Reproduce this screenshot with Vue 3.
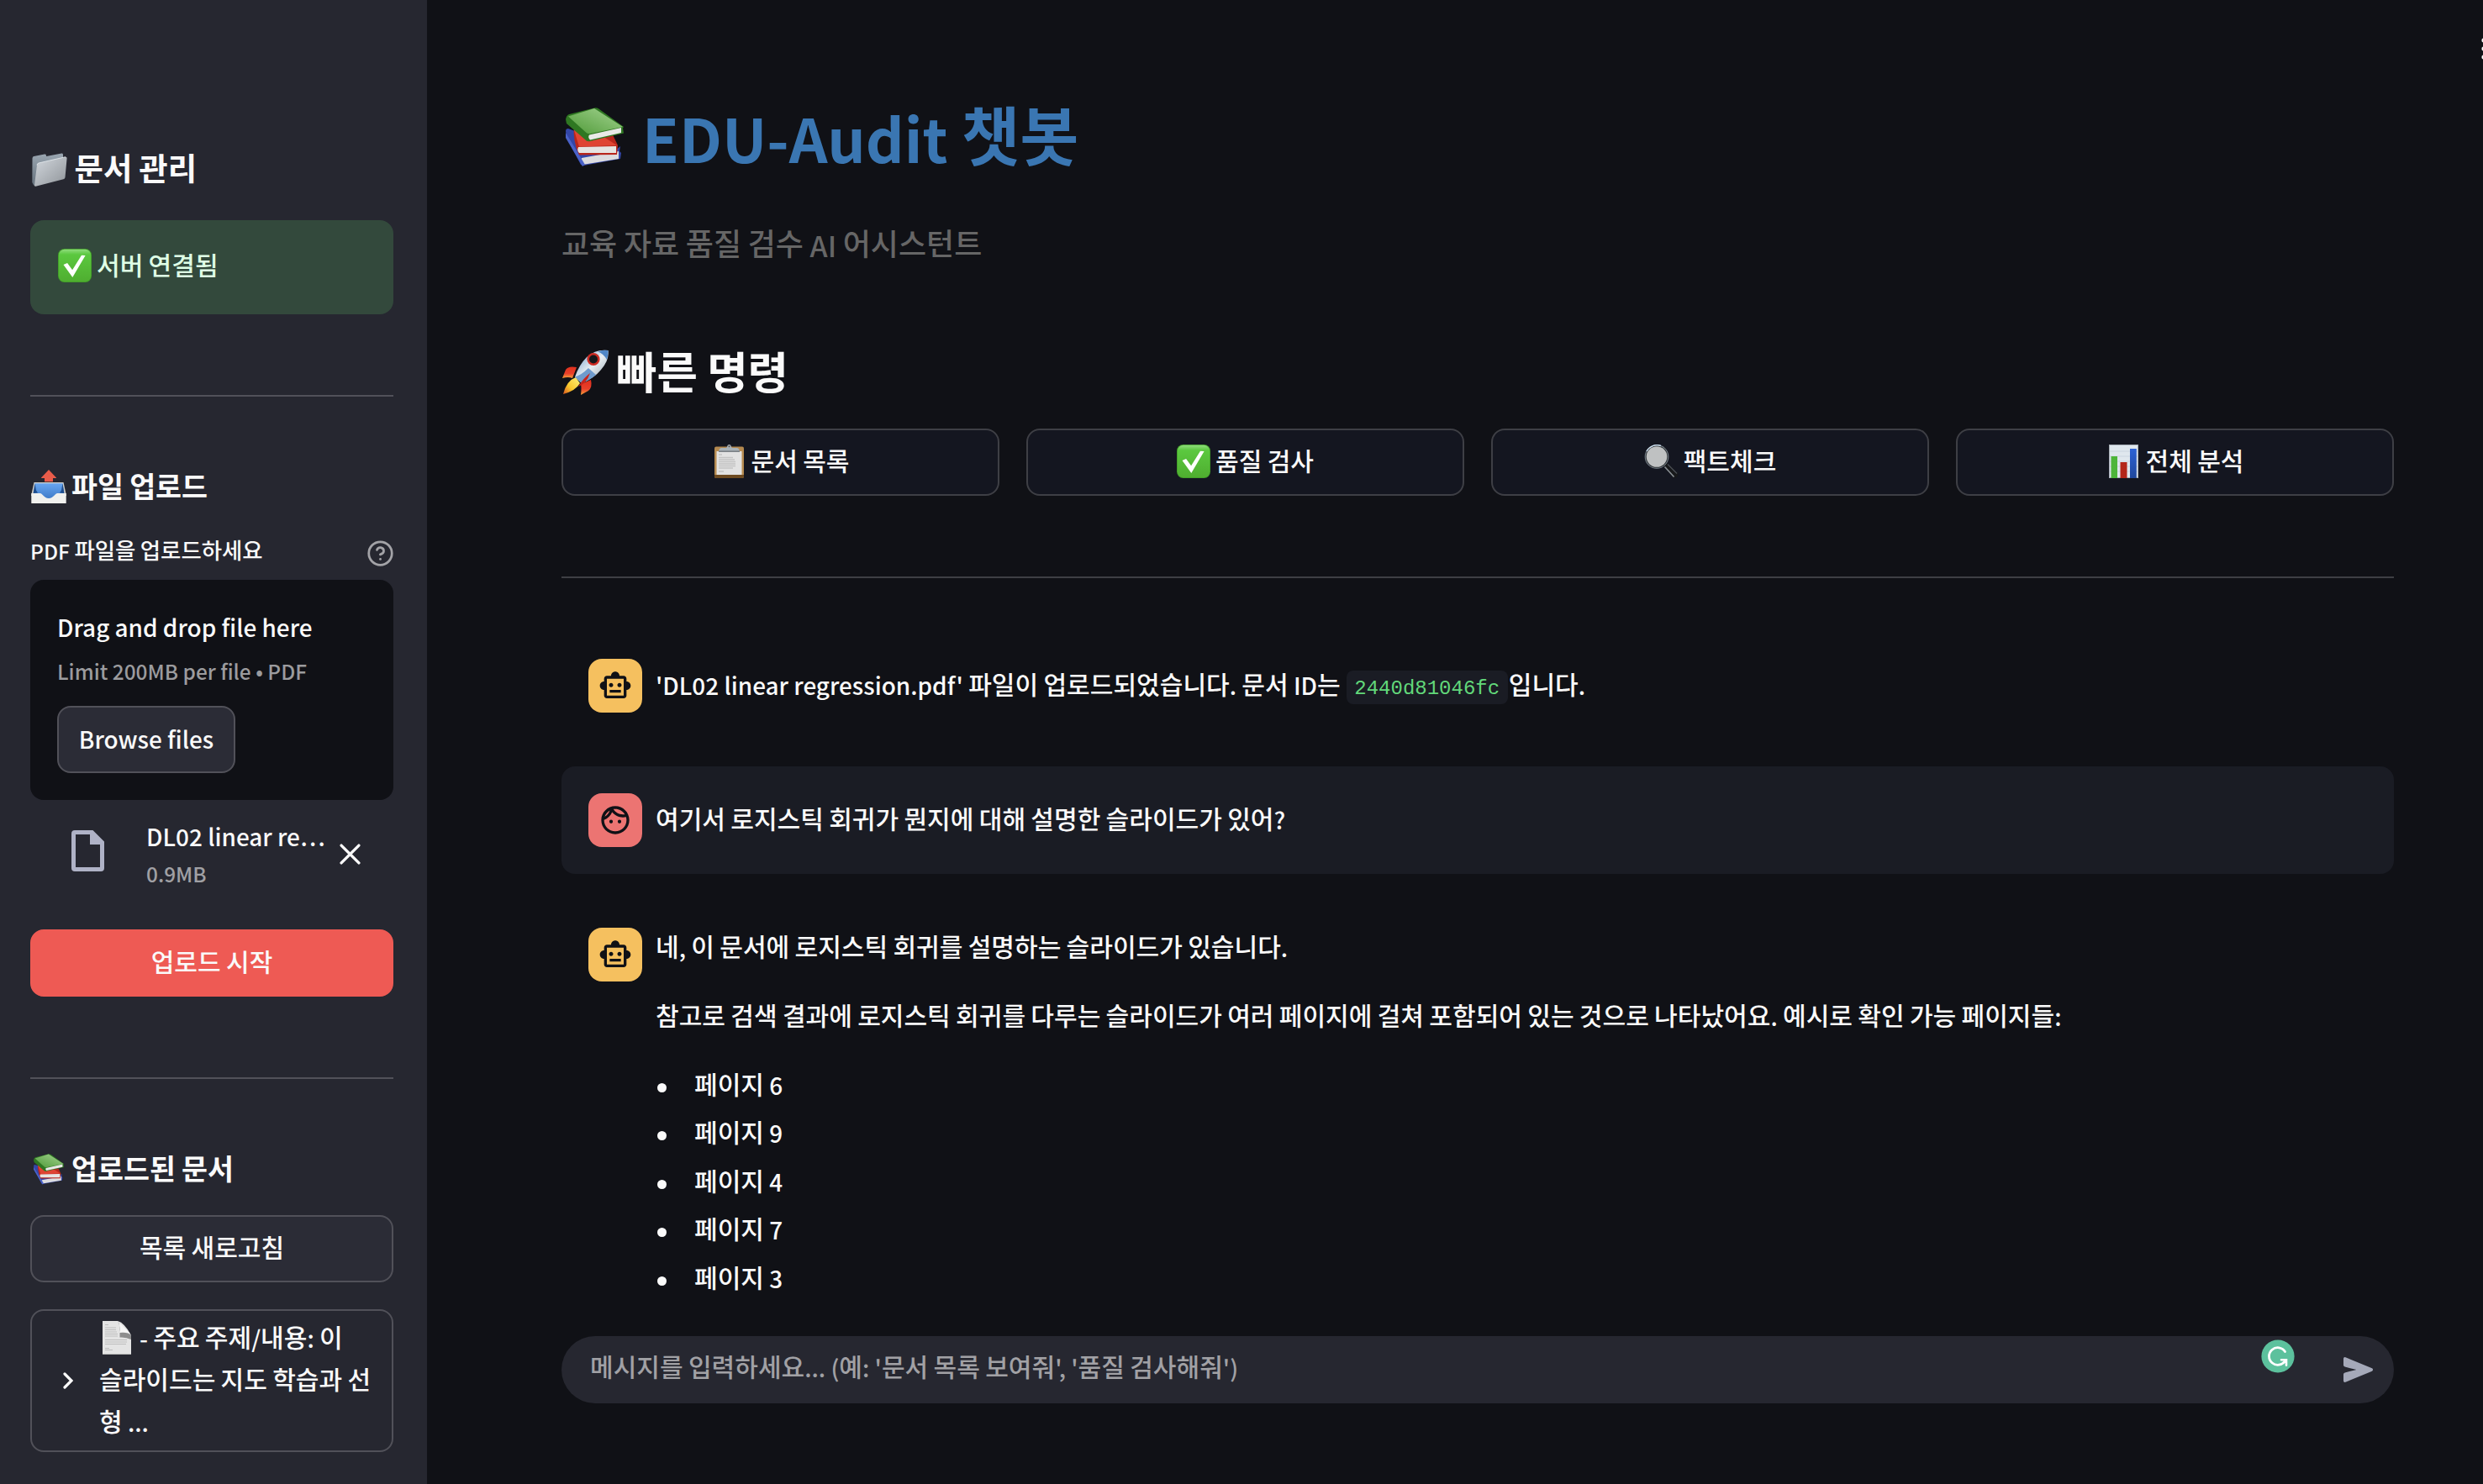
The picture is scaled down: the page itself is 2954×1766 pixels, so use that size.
<script setup>
import { h } from 'vue'

// Hangul and Latin runs are sized separately, so each run gets its own span.
const Txt = (props) =>
  h(
    'span',
    { class: 'txt' },
    props.t
      .split(/([\uac00-\ud7a3]+)/)
      .filter(Boolean)
      .map((run) => (/[\uac00-\ud7a3]/.test(run) ? h('span', { class: 'ko' }, run) : run))
  )
Txt.props = ['t']

const commands = [
  { icon: 'clipboard', label: '문서 목록' },
  { icon: 'check', label: '품질 검사' },
  { icon: 'magnifier', label: '팩트체크' },
  { icon: 'chart', label: '전체 분석' }
]
const pages = [6, 9, 4, 7, 3]
</script>

<template>
  <svg class="defs" width="0" height="0" aria-hidden="true">
    <defs>
      <linearGradient id="gCheck" x1="0" y1="0" x2="0" y2="1">
        <stop offset="0" stop-color="#8fdc7c" /><stop offset=".16" stop-color="#5bc83f" /><stop offset="1" stop-color="#4fae30" />
      </linearGradient>
      <linearGradient id="gFolder" x1="0" y1="0" x2="1" y2="1">
        <stop offset="0" stop-color="#d3d8de" /><stop offset="1" stop-color="#8f9499" />
      </linearGradient>
      <linearGradient id="gFolderBack" x1="0" y1="0" x2="0" y2="1">
        <stop offset="0" stop-color="#9aa6b1" /><stop offset="1" stop-color="#66727d" />
      </linearGradient>
      <linearGradient id="gGreen" x1="0" y1="1" x2="1" y2="0">
        <stop offset="0" stop-color="#4f9a38" /><stop offset="1" stop-color="#a4d491" />
      </linearGradient>
      <linearGradient id="gTray" x1="0" y1="0" x2="0" y2="1">
        <stop offset="0" stop-color="#67a5f0" /><stop offset="1" stop-color="#3d79c6" />
      </linearGradient>
      <linearGradient id="gRocket" x1="0" y1="0" x2="1" y2="1">
        <stop offset="0" stop-color="#5d8fc4" /><stop offset=".5" stop-color="#e8eef2" /><stop offset="1" stop-color="#8c9ca8" />
      </linearGradient>
      <linearGradient id="gFlame" x1="1" y1="0" x2="0" y2="1">
        <stop offset="0" stop-color="#fff27a" /><stop offset=".6" stop-color="#f8c62c" /><stop offset="1" stop-color="#d9541e" />
      </linearGradient>
      <linearGradient id="gFin" x1="0" y1="0" x2="0" y2="1">
        <stop offset="0" stop-color="#e0301e" /><stop offset=".6" stop-color="#e8402a" /><stop offset="1" stop-color="#f6a13a" />
      </linearGradient>
      <linearGradient id="gBlueBar" x1="0" y1="0" x2="0" y2="1">
        <stop offset="0" stop-color="#2c62d6" /><stop offset="1" stop-color="#1f479c" />
      </linearGradient>
    </defs>
    <symbol id="check" viewBox="0 0 40 40">
      <rect width="40" height="40" rx="7.5" fill="#3f9a26" />
      <rect x=".8" y=".8" width="38.4" height="38.4" rx="7" fill="url(#gCheck)" />
      <path d="M6.500 19l4.600-2 6 8.300L28 7.800l4.600.2L17.300 34z" fill="#fff" />
    </symbol>
    <symbol id="folder" viewBox="0 0 42 40">
      <path d="M.5 6.500Q.6 4.500 2.300 4.100L15 1.600q1.600-.3 1.800 1l.3 1.300L35.500.5q1.500-.2 1.500 1.500v5L4 39 2 38.500.3 35z" fill="url(#gFolderBack)" />
      <path d="M6 14.500q.2-2 2-2.500L40 4.700q1.700-.3 1.600 1.500L39.500 29q-.2 1.700-2 2.300L4.500 39.800Q2.800 40 3 38.200z" fill="url(#gFolder)" />
      <path d="M6 14.500q.2-2 2-2.500L40 4.700" fill="none" stroke="#e9edf1" stroke-width=".8" />
    </symbol>
    <symbol id="outbox" viewBox="0 0 42 40">
      <path d="M3.500 15h35L42 31H0z" fill="#cfcfcb" />
      <path d="M4.500 16.300h33L40.200 36H1.800z" fill="url(#gTray)" />
      <path d="M4.500 16.300L2.500 28l5.500-.5-2-3zM37.500 16.300l2 11.700-5.500-.5 2-3z" fill="#1f4d8c" />
      <path d="M.3 28h10.200c3.500 0 4.500 6 10.500 6s7-6 10.500-6h10.200v12H.3z" fill="#f1f1ee" />
      <path d="M21 0l9 9.500q.3.500-.4.500H26v4.200H16V10h-3.600q-.7 0-.4-.5z" fill="#e85c4a" />
    </symbol>
    <symbol id="books" viewBox="0 0 69 71">
      <path d="M0 28q0-3 3-3l8 3 8 28 39-4 7-6-1 6 2 2-1 7-44 8-3-1L1 36z" fill="#3346a8" />
      <path d="M19 60l44-8v9l-43 7q-3-4-1-8z" fill="#dcdcdf" />
      <path d="M0 30l20 33 3 5-3 2L0 36z" fill="#4a62c8" />
      <path d="M10 20L52 24l10 21-1 11-45 .5Q8 40 10 20z" fill="#b8261c" />
      <path d="M10 27l12-7 39 25-45 1.500z" fill="#df4433" />
      <path d="M15 47l45-1v8H16q-3-3-1-7z" fill="#e6e4e2" />
      <path d="M0 14Q1 9 4 8L34 .5q3-.5 5 .8L69 23l-1 1.500 1 6L29 40q-4 .8-6-2L1 19z" fill="#2f7722" />
      <path d="M3 10.500L34 1l34 22-39 8q-3 .5-5-1.500z" fill="url(#gGreen)" />
      <path d="M28 32.500l38-8.500v6L29 38.500q-3-3-1-6z" fill="#e9e9e7" />
    </symbol>
    <symbol id="page" viewBox="0 0 34 40">
      <path d="M0 0h18q8 2 16 17v23H0z" fill="#e4e4e4" />
      <path d="M20.500 2.500L33 15q-6-2-12.500-1z" fill="#f6f6f6" />
      <path d="M18 0q4 6 2.500 14Q30 13 34 17v5Q28 19 20.500 19.500V6z" fill="#8d8d8d" />
      <path d="M3 4.500h4M3 8h13M3 10.500h13M3 13h14M3 15.500h15M3 18h15M3 22.500h26M3 25h26M3 27.500h25M3 32.500h5M3 34.500h9" stroke="#bdbdbd" stroke-width="1.100" />
      <path d="M0 39h34v1H0z" fill="#b5b5b5" />
    </symbol>
    <symbol id="clipboard" viewBox="0 0 35 40">
      <rect y="2.500" width="35" height="37.500" rx="2" fill="#b58a50" />
      <path d="M0 36h35v2q0 2-2 2H2q-2 0-2-2z" fill="#6d4a20" />
      <path d="M2.500 8h30v28h-30z" fill="#e2e2e2" />
      <path d="M5 12h4M5 15.500h17M5 18h19M5 20.500h20M5 23h20M5 25.500h20M5 28h17M5 32h6" stroke="#c4c4c4" stroke-width="1.500" />
      <path d="M5 8.500q.3-4 3-4.500h5.500q1.500 0 1.700-2 .3-2 2.300-2t2.300 2q.2 2 1.700 2H27q2.700.5 3 4.500z" fill="#a9b2b9" />
      <path d="M5 7.500h25v1.300H5z" fill="#6a7074" /><circle cx="17.500" cy="2.300" r="1" fill="#555" />
    </symbol>
    <symbol id="magnifier" viewBox="0 0 41 40">
      <path d="M23 26l4.500-4L40 34q1 3-1.500 5-2 1.600-4 .5z" fill="#17181a" />
      <path d="M24.500 26.500l11 12" stroke="#8a9096" stroke-width="1.600" />
      <path d="M28 23.500l11 11" stroke="#4b5055" stroke-width="1.200" />
      <circle cx="15" cy="14.500" r="14.300" fill="#7c868e" />
      <circle cx="15" cy="14.500" r="13.300" fill="#2b2f33" />
      <circle cx="15" cy="14.500" r="12.300" fill="#bfc1c2" />
      <path d="M3 8A14 14 0 0 1 20 1.500" fill="none" stroke="#cfe2f2" stroke-width="1.400" />
    </symbol>
    <symbol id="chart" viewBox="0 0 35 40">
      <path d="M0 0h35v40H0z" fill="#a7aeb6" /><path d="M1 1h33v38H1z" fill="#dfe7ee" />
      <path d="M1 8h33M1 14h33M1 20h33M1 26h33M1 32h33" stroke="#c5d0da" stroke-width=".8" />
      <path d="M2.500 14h7.500v26H2.500z" fill="#4db53a" /><path d="M13.500 21h8v19h-8z" fill="#b3261a" />
      <path d="M25 5h7.800v35H25z" fill="url(#gBlueBar)" />
    </symbol>
    <symbol id="rocket" viewBox="0 0 56 54">
      <path d="M18 21Q8 19 5 24L1 34q7-2 12 0z" fill="url(#gFin)" />
      <path d="M35 36q2 9-3 13l-9 5q1-8 0-13z" fill="url(#gFin)" />
      <path d="M17 33Q6 37 2 53q15-4 20-13z" fill="url(#gFlame)" />
      <path d="M55.500 1Q41-1 30 9 21 18 16 32.500l8 7.500Q39 34 47 24 57 13 55.500 1z" fill="url(#gRocket)" />
      <path d="M55.500 1q-7-1-12 1.500Q50 5 54 12q2-6 1.500-11z" fill="#4f86c6" />
      <path d="M32 22l9 8q-8 7-17 10l-8-7.500Q24 30 32 22z" fill="#6f9bcd" />
      <path d="M34 28Q26 34 20 44q10-4 14-16z" fill="#c9241b" />
      <circle cx="38" cy="11.500" r="7.600" fill="#cc2a22" /><circle cx="38" cy="11.500" r="5" fill="#15171b" />
    </symbol>
    <symbol id="bot" viewBox="0 0 24 24">
      <path d="M20 9V7c0-1.100-.9-2-2-2h-3c0-1.660-1.340-3-3-3S9 3.340 9 5H6c-1.100 0-2 .9-2 2v2c-1.660 0-3 1.340-3 3s1.340 3 3 3v4c0 1.100.9 2 2 2h12c1.100 0 2-.9 2-2v-4c1.660 0 3-1.340 3-3s-1.340-3-3-3zm-2 10H6V7h12v12zm-9-6c-.83 0-1.500-.67-1.500-1.500S8.170 10 9 10s1.500.67 1.500 1.500S9.830 13 9 13zm7.500-1.500c0 .83-.67 1.500-1.500 1.500s-1.500-.67-1.500-1.500.67-1.500 1.500-1.500 1.500.67 1.500 1.500zM8 15h8v2H8v-2z" />
    </symbol>
    <symbol id="face" viewBox="0 0 24 24">
      <path d="M10.250 13c0 .69-.56 1.250-1.250 1.250S7.750 13.690 7.750 13s.56-1.250 1.250-1.250 1.250.56 1.250 1.250zM15 11.750c-.69 0-1.250.56-1.250 1.250s.56 1.250 1.250 1.250 1.250-.56 1.250-1.250-.56-1.250-1.250-1.250zm7 .25c0 5.520-4.480 10-10 10S2 17.520 2 12 6.480 2 12 2s10 4.480 10 10zM10.660 4.120C12.060 6.440 14.600 8 17.500 8c.46 0 .91-.05 1.340-.12C17.440 5.560 14.900 4 12 4c-.46 0-.91.05-1.340.12zM4.420 9.470c1.710-.97 3.030-2.550 3.660-4.440C6.370 6 5.050 7.580 4.420 9.470zM20 12c0-.78-.12-1.530-.33-2.240-.7.150-1.420.24-2.170.24-3.130 0-5.920-1.440-7.760-3.690C8.690 8.870 6.600 10.880 4 11.860c.01.04 0 .09 0 .14 0 4.410 3.590 8 8 8s8-3.590 8-8z" />
    </symbol>
  </svg>

  <div class="app">
    <aside class="sidebar">
      <h2 class="side-title big">
        <svg class="i-folder"><use href="#folder" /></svg><Txt t="문서 관리" />
      </h2>
      <div class="status">
        <svg class="i-check"><use href="#check" /></svg><Txt t="서버 연결됨" />
      </div>
      <hr />
      <h3 class="side-title">
        <svg class="i-outbox"><use href="#outbox" /></svg><Txt t="파일 업로드" />
      </h3>
      <div class="label">
        <Txt t="PDF 파일을 업로드하세요" />
        <svg class="help" viewBox="0 0 24 24" fill="none" stroke="#a3a3a7" stroke-width="2" stroke-linecap="round" stroke-linejoin="round">
          <circle cx="12" cy="12" r="10" /><path d="M9.090 9a3 3 0 0 1 5.830 1c0 2-3 3-3 3" /><path d="M12 17h.01" />
        </svg>
      </div>
      <div class="drop">
        <div class="drop-title"><Txt t="Drag and drop file here" /></div>
        <div class="drop-hint"><Txt t="Limit 200MB per file • PDF" /></div>
        <button class="btn browse"><Txt t="Browse files" /></button>
      </div>
      <div class="file">
        <svg class="i-file" viewBox="0 0 39 49">
          <path fill-rule="evenodd" fill="#afb2c6" d="M4 0h21.500L39 13.500V45q0 4-4 4H4q-4 0-4-4V4q0-4 4-4zM5 5v39h29V17H22V5z" />
        </svg>
        <div class="file-info">
          <div class="file-name"><Txt t="DL02 linear re…" /></div>
          <div class="file-size"><Txt t="0.9MB" /></div>
        </div>
        <svg class="i-x" viewBox="0 0 24 24"><path d="M2 2l20 20M22 2L2 22" stroke="#fafafa" stroke-width="3.200" stroke-linecap="round" /></svg>
      </div>
      <button class="btn primary"><Txt t="업로드 시작" /></button>
      <hr />
      <h3 class="side-title">
        <svg class="i-books-s"><use href="#books" /></svg><Txt t="업로드된 문서" />
      </h3>
      <button class="btn refresh"><Txt t="목록 새로고침" /></button>
      <div class="expander">
        <svg class="chev" viewBox="0 0 12 20"><path d="M2 2l8 8-8 8" fill="none" stroke="#fafafa" stroke-width="3.200" stroke-linecap="round" /></svg>
        <div class="exp-text">
          <div class="exp-first"><svg class="i-page"><use href="#page" /></svg><Txt t="- 주요 주제/내용: 이" /></div>
          <div><Txt t="슬라이드는 지도 학습과 선" /></div>
          <div><Txt t="형 ..." /></div>
        </div>
      </div>
    </aside>

    <main class="main">
      <svg class="kebab" viewBox="0 0 6 26" fill="#fafafa"><circle cx="3" cy="3" r="2.600" /><circle cx="3" cy="13" r="2.600" /><circle cx="3" cy="23" r="2.600" /></svg>
      <h1 class="title"><svg class="i-books"><use href="#books" /></svg><Txt t="EDU-Audit 챗봇" /></h1>
      <p class="subtitle"><Txt t="교육 자료 품질 검수 AI 어시스턴트" /></p>
      <h2 class="section"><svg class="i-rocket"><use href="#rocket" /></svg><Txt t="빠른 명령" /></h2>
      <div class="commands">
        <button v-for="c in commands" :key="c.icon" class="btn command">
          <svg :class="'i-' + c.icon"><use :href="'#' + c.icon" /></svg><Txt :t="c.label" />
        </button>
      </div>
      <hr />

      <section class="chat">
        <div class="msg">
          <div class="avatar bot"><svg><use href="#bot" /></svg></div>
          <div class="line"><Txt t="'DL02 linear regression.pdf' 파일이 업로드되었습니다. 문서 ID는" /><code>2440d81046fc</code><Txt t="입니다." /></div>
        </div>
        <div class="msg user">
          <div class="avatar human"><svg><use href="#face" /></svg></div>
          <div class="line"><Txt t="여기서 로지스틱 회귀가 뭔지에 대해 설명한 슬라이드가 있어?" /></div>
        </div>
        <div class="msg">
          <div class="avatar bot"><svg><use href="#bot" /></svg></div>
          <div class="body">
            <p><Txt t="네, 이 문서에 로지스틱 회귀를 설명하는 슬라이드가 있습니다." /></p>
            <p><Txt t="참고로 검색 결과에 로지스틱 회귀를 다루는 슬라이드가 여러 페이지에 걸쳐 포함되어 있는 것으로 나타났어요. 예시로 확인 가능 페이지들:" /></p>
            <ul>
              <li v-for="p in pages" :key="p"><Txt :t="'페이지 ' + p" /></li>
            </ul>
          </div>
        </div>
      </section>

      <div class="input">
        <Txt t="메시지를 입력하세요... (예: '문서 목록 보여줘', '품질 검사해줘')" />
        <svg class="grammar" viewBox="0 0 40 40">
          <circle cx="20" cy="20" r="19.600" fill="#5cc19d" />
          <path d="M28.500 14.500A10.300 10.300 0 1 0 28.500 25.500" fill="none" stroke="#fff" stroke-width="2.800" stroke-linecap="round" />
          <path d="M24 24.300h6v6.500M29.500 24.800l-3 3" fill="none" stroke="#fff" stroke-width="2.600" stroke-linecap="round" />
        </svg>
        <svg class="send" viewBox="0 0 35 30">
          <path fill="#a5a9b9" d="M0 1.800Q.2-.5 2.400.2L34 13.300q2.200 1.700 0 3.400L2.400 29.800Q.2 30.500 0 28.200V20.500q0-1.700 1.700-2.100L15.500 15 1.700 11.600Q0 11.200 0 9.500z" />
        </svg>
      </div>
    </main>
  </div>
</template>

<style>
html,
body {
  margin: 0;
  background: #101116;
}
.txt {
  white-space: pre;
}
.txt .ko {
  font-size: 1.078em;
  line-height: 0;
  vertical-align: 0.045em;
}
.title .ko,
.subtitle .ko,
.section .ko,
.side-title .ko {
  font-size: 1.062em;
}
</style>

<style scoped>
* {
  box-sizing: border-box;
}
.defs {
  position: absolute;
}
.app {
  display: flex;
  width: 2954px;
  height: 1766px;
  overflow: hidden;
  background: #101116;
  color: #fafafa;
  font-family: 'Noto Sans CJK KR', 'Noto Sans', sans-serif;
  font-size: 27.900px;
  font-weight: 500;
  line-height: 50px;
}
h1,
h2,
h3,
p,
ul {
  margin: 0;
  padding: 0;
}
svg {
  flex: none;
  display: block;
}
hr {
  width: 100%;
  height: 2px;
  margin: 96px 0 0;
  border: 0;
  background: #3e3f44;
  flex: none;
}
.btn {
  display: flex;
  align-items: center;
  justify-content: center;
  height: 80px;
  padding: 0 0 2px;
  border: 2px solid #3e3f45;
  border-radius: 16px;
  background: #141620;
  color: #fafafa;
  font: inherit;
  line-height: 50px;
}

.sidebar {
  flex: none;
  width: 508px;
  padding: 178px 40px 0 36px;
  background: #262730;
}
.sidebar hr {
  background: #515159;
}
.side-title {
  display: flex;
  align-items: center;
  height: 46px;
  margin-top: 84px;
  font-size: 31.700px;
  line-height: 46px;
  font-weight: 600;
}
.side-title.big {
  height: 48px;
  margin-top: 0;
  font-size: 35.200px;
  line-height: 48px;
}
.i-folder {
  width: 42px;
  height: 40px;
  margin: 0 9px 0 1.500px;
}
.i-outbox {
  width: 42px;
  height: 40px;
  margin: 0 6px 0 1px;
}
.i-books-s {
  width: 36px;
  height: 37px;
  margin: 0 9px 0 4px;
}
.status {
  display: flex;
  align-items: center;
  height: 112px;
  margin-top: 36px;
  padding: 0 33px 4px;
  border-radius: 16px;
  background: #33493c;
  color: #dfffe6;
}
.i-check {
  width: 40px;
  height: 40px;
  margin-right: 6px;
}
.label {
  display: flex;
  align-items: center;
  justify-content: space-between;
  height: 40px;
  margin-top: 34px;
  font-size: 24.500px;
}
.help {
  width: 33px;
  height: 33px;
  margin: 4px -1px 0 0;
}
.drop {
  height: 262px;
  margin-top: 14px;
  padding: 34px 32px 0;
  border-radius: 16px;
  background: #101116;
}
.drop-title {
  line-height: 44px;
}
.drop-hint {
  margin: 11px 0 21px;
  font-size: 24.400px;
  line-height: 40px;
  color: #9b9b9e;
}
.browse {
  width: 212px;
  border-color: #515159;
  background: #2b2c36;
}
.file {
  display: flex;
  align-items: center;
  height: 154px;
  padding: 0 39px 26px 49px;
}
.i-file {
  width: 39px;
  height: 49px;
  margin-top: -7px;
}
.file-info {
  flex: 1;
  margin-left: 50px;
  white-space: nowrap;
}
.file-name {
  line-height: 44px;
}
.file-size {
  margin-top: 3px;
  font-size: 24.400px;
  line-height: 40px;
  color: #a0a0a4;
}
.i-x {
  width: 25px;
  height: 25px;
}
.primary {
  width: 432px;
  border-color: #ee5a54;
  background: #ee5a54;
}
.refresh {
  width: 432px;
  margin-top: 32px;
  border-color: #515159;
  background: #2b2c36;
}
.expander {
  display: flex;
  width: 432px;
  height: 170px;
  margin-top: 32px;
  padding: 7px 0 0 37px;
  border: 2px solid #515159;
  border-radius: 16px;
}
.chev {
  width: 12px;
  height: 20px;
  margin: 66px 31px 0 0;
}
.exp-text {
  white-space: nowrap;
}
.exp-first {
  display: flex;
  align-items: center;
}
.i-page {
  width: 34px;
  height: 40px;
  margin: 0 10px 0 4px;
}

.main {
  position: relative;
  flex: 1;
  display: flex;
  flex-direction: column;
  padding: 116px 106px 96px 160px;
}
.kebab {
  position: absolute;
  right: -4px;
  top: 45px;
  width: 6px;
  height: 26px;
}
.title {
  display: flex;
  align-items: center;
  height: 96px;
  padding-bottom: 2px;
  font-size: 71.400px;
  line-height: 94px;
  font-weight: 700;
  color: #3a76b2;
}
.i-books {
  width: 69px;
  height: 71px;
  margin: 0 22px 0 5px;
}
.subtitle {
  height: 50px;
  margin-top: 54px;
  font-size: 33.900px;
  line-height: 52px;
  color: #666;
}
.section {
  display: flex;
  align-items: center;
  height: 64px;
  margin-top: 96px;
  padding-bottom: 2px;
  font-size: 49.600px;
  line-height: 62px;
  font-weight: 600;
}
.i-rocket {
  width: 56px;
  height: 54px;
  margin-right: 9px;
}
.commands {
  display: grid;
  grid-template-columns: repeat(4, 1fr);
  gap: 32px;
  margin-top: 34px;
}
.i-clipboard {
  width: 35px;
  height: 40px;
  margin: 0 9px 0 3px;
}
.i-magnifier {
  width: 41px;
  height: 40px;
  margin-right: 6px;
}
.i-chart {
  width: 35px;
  height: 40px;
  margin: 0 9px 0 3px;
}
.chat {
  display: flex;
  flex-direction: column;
  gap: 32px;
  margin-top: 64px;
}
.msg {
  display: flex;
  gap: 16px;
  padding: 32px;
  border-radius: 16px;
}
.msg.user {
  background: #1a1c24;
}
.avatar {
  flex: none;
  display: flex;
  align-items: center;
  justify-content: center;
  width: 64px;
  height: 64px;
  border-radius: 16px;
}
.avatar svg {
  width: 40px;
  height: 40px;
  fill: #101116;
}
.bot {
  background: #f5c05f;
}
.human {
  background: #ec7472;
}
.line {
  display: flex;
  align-items: center;
  height: 64px;
  padding-bottom: 2px;
  white-space: nowrap;
}
code {
  height: 40px;
  margin: 6px 1px 0 7px;
  padding: 0 9.600px;
  border-radius: 8px;
  background: #1a1c24;
  color: #62d87a;
  font-family: 'Liberation Mono', monospace;
  font-size: 24px;
  font-weight: 400;
  line-height: 43px;
}
.body {
  margin-top: -2px;
}
.body p {
  height: 50px;
  margin-bottom: 32px;
  white-space: nowrap;
}
ul {
  margin-top: -4px;
  list-style: none;
}
li {
  display: flex;
  align-items: center;
  height: 57.500px;
}
li::before {
  content: '';
  width: 11px;
  height: 11px;
  margin: 7px 33px 0 2px;
  border-radius: 50%;
  background: #fafafa;
}
.input {
  position: relative;
  display: flex;
  align-items: center;
  height: 80px;
  margin-top: auto;
  padding: 0 25px 0 34px;
  border-radius: 40px;
  background: #262730;
  color: #a1a1a5;
}
.input .txt {
  margin-bottom: 7px;
}
.grammar {
  position: absolute;
  right: 118px;
  top: 4px;
  width: 40px;
  height: 40px;
}
.send {
  width: 35px;
  height: 30px;
  margin-left: auto;
}
</style>
